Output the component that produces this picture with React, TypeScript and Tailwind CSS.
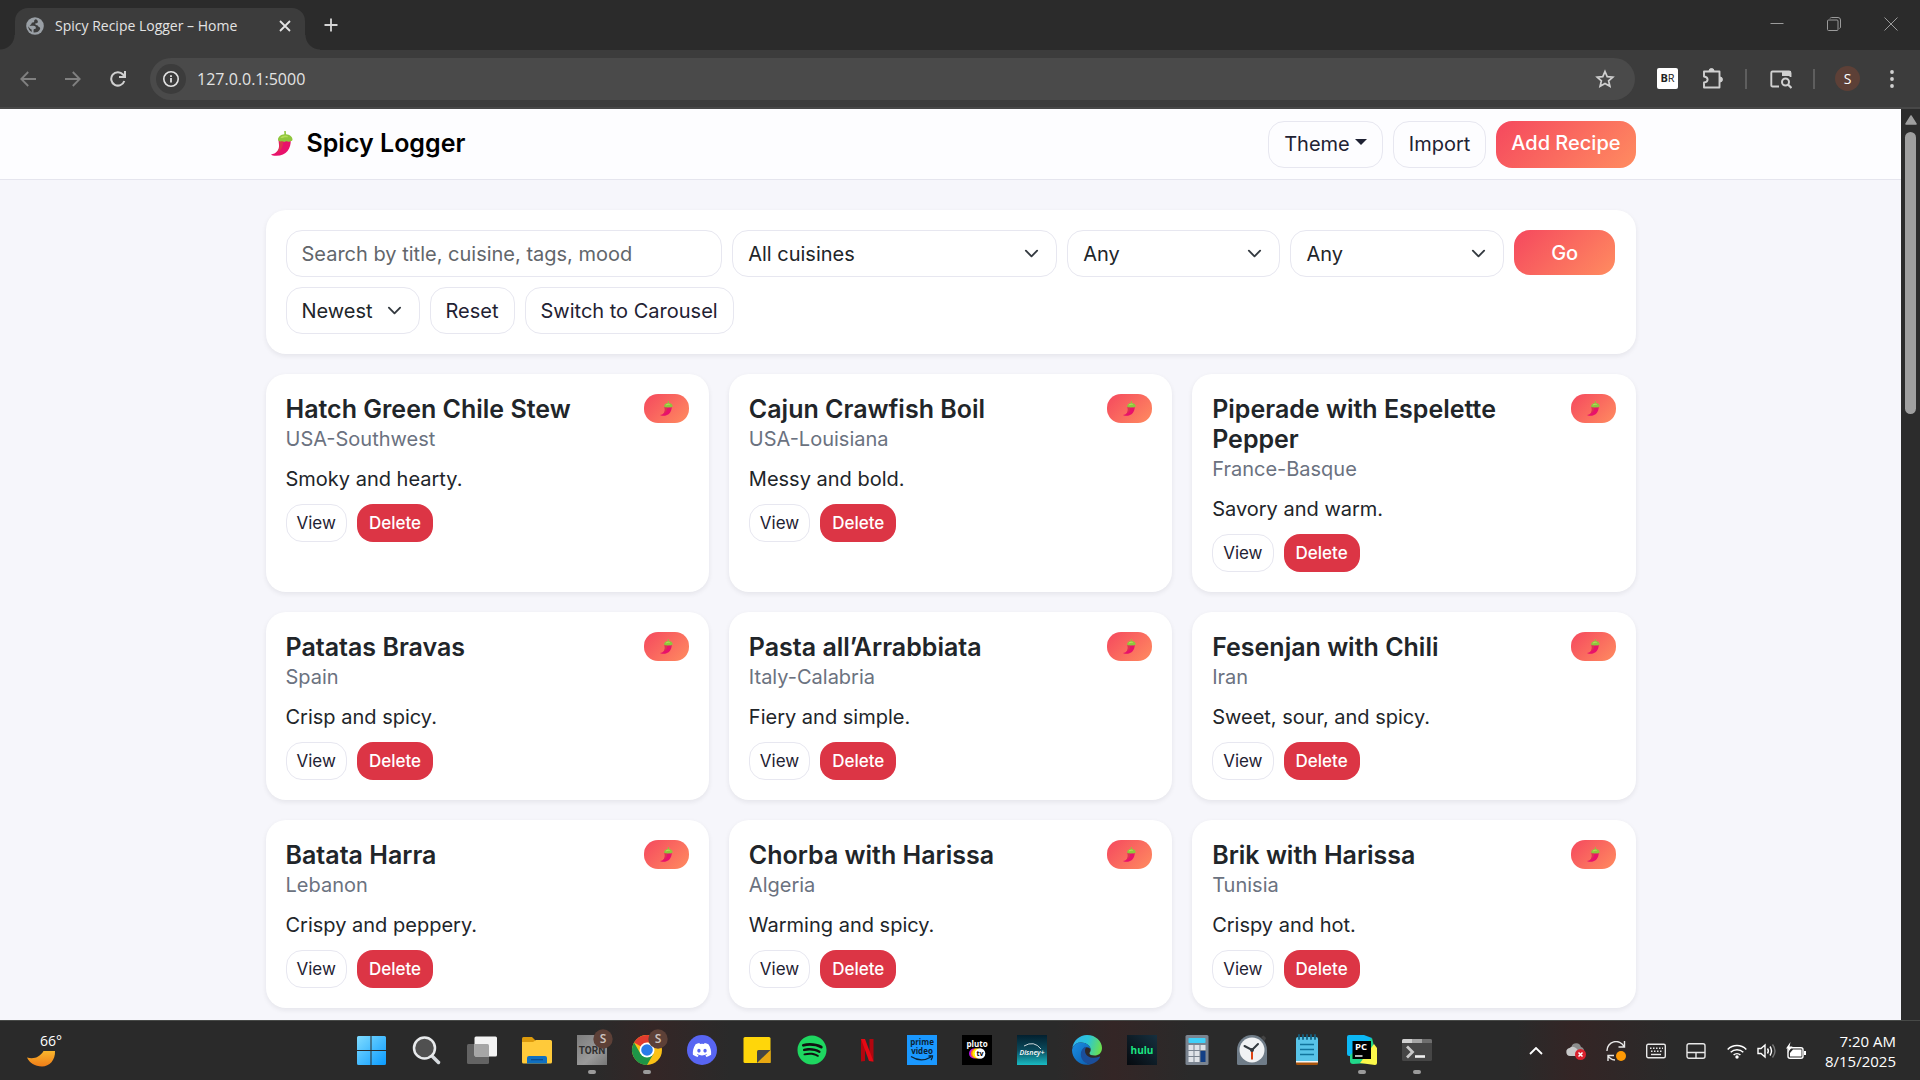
import type { ReactNode } from "react";
import { FaDiscord, FaSpotify } from "react-icons/fa6";

type Recipe = { title: string; origin: string; note: string };

const recipes: Recipe[] = [
  { title: "Hatch Green Chile Stew", origin: "USA-Southwest", note: "Smoky and hearty." },
  { title: "Cajun Crawfish Boil", origin: "USA-Louisiana", note: "Messy and bold." },
  { title: "Piperade with Espelette Pepper", origin: "France-Basque", note: "Savory and warm." },
  { title: "Patatas Bravas", origin: "Spain", note: "Crisp and spicy." },
  { title: "Pasta all’Arrabbiata", origin: "Italy-Calabria", note: "Fiery and simple." },
  { title: "Fesenjan with Chili", origin: "Iran", note: "Sweet, sour, and spicy." },
  { title: "Batata Harra", origin: "Lebanon", note: "Crispy and peppery." },
  { title: "Chorba with Harissa", origin: "Algeria", note: "Warming and spicy." },
  { title: "Brik with Harissa", origin: "Tunisia", note: "Crispy and hot." },
];

const outline = "rounded-[16px] border border-[#e7e7f0] text-[#1f2233]";
const gradient = "bg-[linear-gradient(135deg,#f5485e,#ff8c60)]";

function Chili({ className }: { className: string }) {
  return (
    <svg viewBox="0 0 22 25" className={className} aria-hidden="true">
      <path d="M7.5 9h12.200c.5 8-4 15.800-14.500 15.800-2.500 0-4.700-.5-5.200-1.300 5.200-.8 8.500-4.500 8-9.500z" fill="#e8116b" />
      <path d="M8 9h4c.8 6-1.500 10.500-6.500 13C8.300 18.500 9.300 15 8 9z" fill="#dc3450" />
      <path d="M13.200 0h1.600l.2 3.200c3.800.3 6.500 2.600 6.500 5.200 0 1-.8 1.500-1.700 1.500-1 0-1.200.8-2.100.8s-1.200-.5-2.200-.5-1.300.7-2.300.7-1.300-.6-2.300-.6-1.200.3-2 .1C7.900 10.200 7 9.600 7 8.600 7 5.800 9.900 3.500 13.400 3.200z" fill="#8fc63d" />
      <path d="M9.500 6.500c1-1.500 3-2.200 5-2.100 1.500.1 2.500.8 2.500 1.500s-2.500.3-4 .5-3.500 1.300-3.500.1z" fill="#b4dc5a" />
    </svg>
  );
}

function Select({ label, options, className }: { label: string; options: string[]; className: string }) {
  return (
    <div className={`relative ${className}`}>
      <select
        aria-label={label}
        className="h-[47px] w-full appearance-none rounded-[16px] border border-[#e7e7f0] bg-white pl-[15px] pr-10 text-[20px] text-[#212529]"
      >
        {options.map((o) => (
          <option key={o}>{o}</option>
        ))}
      </select>
      <svg viewBox="0 0 16 16" className="pointer-events-none absolute right-[18px] top-4 size-[15px]" fill="none" stroke="#343a40" strokeWidth="2" strokeLinecap="round" strokeLinejoin="round" aria-hidden="true">
        <path d="m2 5 6 6 6-6" />
      </svg>
    </div>
  );
}

function RecipeCard({ title, origin, note }: Recipe) {
  return (
    <article className="rounded-[20px] bg-white p-5 shadow-[0_2px_5px_rgba(20,20,40,0.08)]">
      <div className="flex items-start justify-between">
        <div>
          <h2 className="text-[25px] font-semibold leading-[30px] text-[#212529]">{title}</h2>
          <p className="text-[#6b7280]">{origin}</p>
        </div>
        <span className={`flex h-[29px] w-[45px] shrink-0 items-center justify-center rounded-[14px] ${gradient}`}>
          <Chili className="h-[15px] w-[13px]" />
        </span>
      </div>
      <p className="my-[10px]">{note}</p>
      <div className="flex gap-[10px]">
        <button className={`h-[38px] px-[10px] text-[17px] ${outline}`}>View</button>
        <button className="h-[38px] rounded-[16px] bg-[#dc3545] px-3 text-[17px] font-medium text-white">Delete</button>
      </div>
    </article>
  );
}

function BrowserChrome() {
  return (
    <header className="shrink-0 font-['Open_Sans','Noto_Sans',sans-serif]">
      <div className="flex h-[50px] items-end justify-between bg-[#2b2b2b]">
        <div className="flex items-end">
          <div className="size-[15px] bg-[radial-gradient(circle_at_0_0,#2b2b2b_14px,#3c3c3c_15px)]" />
          <div className="flex h-[42px] w-[290px] items-center rounded-t-[13px] bg-[#3c3c3c] pb-[7px] pl-[11px] pr-[10px]">
            <svg viewBox="0 0 18 18" className="size-[18px]" aria-hidden="true">
              <circle cx="9" cy="9" r="8.800" fill="#9aa0a6" />
              <path d="M10 2.300c-1.200.2-2 .9-1.800 1.900.2.900-.8 1.300-1.900 1.300-.8.1-.6 1.200-1.100 1.700-.6.6-1.800.8-1.300 1.600h3.600c1.400 0 2.400.9 2.400 2.200 0 .8-.9 1-1.700 1-.8.1-.6 1.400-.6 3.500 3.500.2 5.400-1.200 6.400-3.300.5-1.100-.2-1.800-1-2.200-1.200-.5-.7-1.500-2-1.700-1.400-.2-2.200-.9-1.600-1.700.5-.7 1.800-.4 2.300-1.200.5-.9 0-2.400-1.700-3.100zM2.200 9.200c0 2.500 1.500 4.700 3.600 5.800l-.2-2.600C4 12 3.300 10.600 2.200 9.200z" fill="#3c3c3c" />
            </svg>
            <span className="ml-[11px] grow whitespace-nowrap text-[14px] text-[#e3e3e3]">Spicy Recipe Logger – Home</span>
            <button aria-label="Close tab" className="flex size-5 items-center justify-center">
              <svg viewBox="0 0 12 12" className="size-3" stroke="#e3e3e3" strokeWidth="1.800"><path d="M1 1l10 10M11 1L1 11" /></svg>
            </button>
          </div>
          <div className="size-[15px] bg-[radial-gradient(circle_at_100%_0,#2b2b2b_14px,#3c3c3c_15px)]" />
          <button aria-label="New tab" className="mb-[14px] flex size-[22px] items-center justify-center">
            <svg viewBox="0 0 14 14" className="size-[14px]" stroke="#d5d5d5" strokeWidth="1.800"><path d="M7 0.500v13M0.500 7h13" /></svg>
          </button>
        </div>
        <div className="flex self-start pr-px">
          <button aria-label="Minimize" className="flex h-12 w-[57px] items-center justify-center">
            <svg viewBox="0 0 14 14" className="size-[14px]" stroke="#9b9b9b"><path d="M0.500 6.500h13" /></svg>
          </button>
          <button aria-label="Restore" className="flex h-12 w-[57px] items-center justify-center">
            <svg viewBox="0 0 14 14" className="size-[14px]" fill="none" stroke="#9b9b9b"><rect x="0.500" y="3" width="10.500" height="10.500" rx="1" /><path d="M3 1.500q.4-1 1.500-1H11q2.500 0 2.500 2.500v7q0 1-1 1.500" /></svg>
          </button>
          <button aria-label="Close" className="flex h-12 w-[57px] items-center justify-center">
            <svg viewBox="0 0 14 14" className="size-[14px]" stroke="#9b9b9b"><path d="M0.500 0.500l13 13M13.500 0.500l-13 13" /></svg>
          </button>
        </div>
      </div>
      <div className="flex h-[59px] items-center border-b-2 border-[#484848] bg-[#3c3c3c]">
        <div className="flex w-[150px] pl-[5px]">
          <button aria-label="Back" className="flex h-10 w-[45px] items-center justify-center">
            <svg viewBox="0 0 16 16" className="size-4" fill="none" stroke="#808080" strokeWidth="1.800"><path d="M16 8H1.500M8.200 1L1.300 8l6.900 7" /></svg>
          </button>
          <button aria-label="Forward" className="flex h-10 w-[45px] items-center justify-center">
            <svg viewBox="0 0 16 16" className="size-4" fill="none" stroke="#808080" strokeWidth="1.800"><path d="M0 8h14.500M7.800 1l6.900 7-6.900 7" /></svg>
          </button>
          <button aria-label="Reload" className="flex h-10 w-[45px] items-center justify-center">
            <svg viewBox="0 0 16 16" className="size-4" fill="none" stroke="#d0d0d0" strokeWidth="2"><path d="M14.300 10A6.700 6.700 0 1 1 13 3.500L14.800 5.500M15 0v6H9" /></svg>
          </button>
        </div>
        <div className="flex h-[42px] grow items-center rounded-full bg-[#4a4a4a] pl-[6px] pr-[20px]">
          <button aria-label="Site information" className="flex size-[30px] items-center justify-center rounded-full bg-[#3c3c3c]">
            <svg viewBox="0 0 16 16" className="size-4" fill="none" stroke="#e3e3e3" strokeWidth="1.600"><circle cx="8" cy="8" r="7.200" /><path d="M8 7v4.500M8 4.200v1.700" strokeWidth="1.800" /></svg>
          </button>
          <input aria-label="Address" defaultValue="127.0.0.1:5000" className="ml-[11px] grow bg-transparent text-[16px] text-[#e3e3e3] outline-none" />
          <button aria-label="Bookmark">
            <svg viewBox="0 0 20 20" className="size-5" fill="none" stroke="#d0d0d0" strokeWidth="1.700"><path d="M10 2.500l2.200 5.100 5.600.5-4.200 3.700 1.300 5.500L10 14.400l-4.900 2.900 1.300-5.500-4.200-3.700 5.600-.5z" /></svg>
          </button>
        </div>
        <div className="flex items-center pl-[22px] pr-[18px]">
          <button aria-label="BR extension" className="flex size-[21px] items-center justify-center rounded-[2px] bg-white text-[11px] text-[#222]">
            <b>B</b>R
          </button>
          <button aria-label="Extensions" className="ml-[24px]">
            <svg viewBox="0 0 22 22" className="size-[22px]" fill="none" stroke="#d0d0d0" strokeWidth="1.900" strokeLinejoin="round"><path d="M2 3.500h15.500v16H2v-5c2.600-.3 3.600-1.400 3.600-3S4.600 8.800 2 8.500z" /><path d="M7 3a2.500 2.500 0 0 1 5 0zM18 9a2.500 2.500 0 0 1 0 5z" fill="#d0d0d0" strokeWidth="1" /></svg>
          </button>
          <div className="ml-[21px] h-5 w-[2px] bg-[#5e5e5e]" />
          <button aria-label="Search side panel" className="ml-[23px]">
            <svg viewBox="0 0 22 20" className="h-5 w-[22px]" fill="none" stroke="#d0d0d0" strokeWidth="1.900"><path d="M9 17.500H2.500q-1.200 0-1.200-1.200V3.700q0-1.200 1.200-1.200H19q1.500 0 1.500 1.500v4" /><path d="M12 2h9v5h-9z" fill="#d0d0d0" stroke="none" /><circle cx="15.500" cy="13" r="3.500" strokeWidth="2" /><path d="M18 15.500l3.500 3.500" strokeWidth="2.200" /></svg>
          </button>
          <div className="ml-[21px] h-5 w-[2px] bg-[#5e5e5e]" />
          <button aria-label="Profile" className="ml-[20px] flex size-[25px] items-center justify-center rounded-full bg-[#5d4037] text-[14px] text-white">S</button>
          <button aria-label="Menu" className="ml-[22px] flex w-5 justify-center">
            <svg viewBox="0 0 4 18" className="h-[18px] w-1" fill="#d0d0d0"><circle cx="2" cy="2" r="1.900" /><circle cx="2" cy="9" r="1.900" /><circle cx="2" cy="16" r="1.900" /></svg>
          </button>
        </div>
      </div>
    </header>
  );
}

function Page() {
  return (
    <div className="min-w-0 grow overflow-hidden bg-[#f6f6fb] font-[Inter,sans-serif] text-[20px] leading-[30px] text-[#212529]">
      <nav className="border-b border-[#e5e5ee] bg-[#fdfdff]">
        <div className="mx-auto flex h-[70px] max-w-[1370px] items-center justify-between">
          <a href="#" className="flex items-center pb-[2px] pl-[5px] text-[25px] font-semibold text-black">
            <Chili className="mr-[14px] h-[25px] w-[22px]" />
            Spicy Logger
          </a>
          <div className="flex gap-[10px]">
            <button className={`flex h-[47px] items-center gap-[5px] px-[15px] ${outline}`}>
              Theme
              <svg viewBox="0 0 12 6" className="mb-1 h-[6px] w-3" fill="#1f2233" aria-hidden="true"><path d="M0 0h12L6 6z" /></svg>
            </button>
            <button className={`h-[47px] px-[15px] ${outline}`}>Import</button>
            <button className={`h-[47px] rounded-[16px] px-[15px] pb-[2px] font-medium text-white ${gradient}`}>Add Recipe</button>
          </div>
        </div>
      </nav>
      <main className="mx-auto max-w-[1370px] pt-[30px]">
        <form className="rounded-[20px] bg-white p-5 shadow-[0_2px_5px_rgba(20,20,40,0.08)]" onSubmit={(e) => e.preventDefault()}>
          <div className="grid grid-cols-12 gap-[10px]">
            <input
              type="search"
              aria-label="Search recipes"
              placeholder="Search by title, cuisine, tags, mood"
              className="col-span-4 h-[47px] min-w-0 rounded-[16px] border border-[#e7e7f0] px-[15px] placeholder:text-[#62666b]"
            />
            <Select label="Cuisine" options={["All cuisines"]} className="col-span-3" />
            <Select label="Heat level" options={["Any"]} className="col-span-2" />
            <Select label="Difficulty" options={["Any"]} className="col-span-2" />
            <button className={`h-[45px] rounded-[16px] font-medium text-white ${gradient}`}>Go</button>
          </div>
          <div className="mt-[10px] flex gap-[10px]">
            <Select label="Sort by" options={["Newest"]} className="w-[134px]" />
            <button type="button" className={`h-[47px] px-[15px] ${outline}`}>Reset</button>
            <button type="button" className={`h-[47px] px-[15px] ${outline}`}>Switch to Carousel</button>
          </div>
        </form>
        <section className="mt-5 grid grid-cols-3 gap-5">
          {recipes.map((r) => (
            <RecipeCard key={r.title} {...r} />
          ))}
        </section>
      </main>
    </div>
  );
}

function Scrollbar() {
  return (
    <div className="flex w-[19px] shrink-0 flex-col items-center bg-[#2c2c2c] pt-[6px]">
      <svg viewBox="0 0 12 10" className="h-[10px] w-3" fill="#9f9f9f" stroke="#9f9f9f" strokeWidth="1.500" strokeLinejoin="round"><path d="M6 1l5 8H1z" /></svg>
      <div className="mt-[7px] h-[282px] w-[11px] rounded-full bg-[#9f9f9f]" />
    </div>
  );
}

function AppIcon({ children, label }: { children: ReactNode; label: string }) {
  return (
    <svg viewBox="0 0 30 30" className="size-[30px] overflow-visible" role="img" aria-label={label}>
      {children}
    </svg>
  );
}

const profileBadge = (
  <g>
    <circle cx="26" cy="4" r="9.700" fill="#5d4037" />
    <text x="26" y="8" textAnchor="middle" fontSize="12" fontWeight="600" fill="#cfc4c0">S</text>
  </g>
);

const apps: { label: string; running?: boolean; icon: ReactNode }[] = [
  {
    label: "Start",
    icon: (
      <>
        <defs><linearGradient id="win" x1="0" y1="0" x2="1" y2="1"><stop offset="0" stopColor="#80dcff" /><stop offset="1" stopColor="#0a9bff" /></linearGradient></defs>
        <path d="M0 2.500Q0 1 1.500 1H13.500V15H0zM14.500 1H27.500Q29 1 29 2.500V15H14.500zM0 16H13.500V30H1.500Q0 30 0 28.500zM14.500 16H29V28.500Q29 30 27.500 30H14.500z" fill="url(#win)" />
      </>
    ),
  },
  {
    label: "Search",
    icon: (
      <g fill="none" strokeLinecap="round">
        <path d="M20.500 21.500l6 6" stroke="#d6dade" strokeWidth="3.500" />
        <circle cx="12.500" cy="13" r="10.500" fill="#505050" stroke="#e8eaec" strokeWidth="2.500" />
      </g>
    ),
  },
  {
    label: "Task view",
    icon: (
      <>
        <rect x="0" y="9" width="22" height="20" rx="1.500" fill="#636363" />
        <rect x="7.500" y="1.500" width="22.500" height="20" rx="1.500" fill="#f3f3f3" />
        <path d="M7.500 9H20.500q1.500 0 1.500 1.500v11H9q-1.500 0-1.500-1.500z" fill="#a6a6a6" />
      </>
    ),
  },
  {
    label: "File Explorer",
    icon: (
      <>
        <path d="M0 3.500Q0 2 1.500 2H10l3.500 3.500V12H0z" fill="#dc9a0c" />
        <path d="M0 7h11l3-2h14.500Q30 5 30 6.500V27q0 1.500-1.500 1.500h-27Q0 28.500 0 27z" fill="#ffca3a" />
        <path d="M5 28.500V23q0-2 2-2h16q2 0 2 2v5.500z" fill="#1070c0" />
        <path d="M9 24.700h12" stroke="#0a4a8c" strokeWidth="1.200" />
      </>
    ),
  },
  {
    label: "Torn",
    running: true,
    icon: (
      <>
        <defs><linearGradient id="torn" x1="0" y1="0" x2="1" y2="1"><stop offset="0" stopColor="#7d7d7d" /><stop offset=".6" stopColor="#9a9a9a" /><stop offset="1" stopColor="#777" /></linearGradient></defs>
        <path d="M0 0h30v30H0z" fill="url(#torn)" />
        <text x="15" y="18.500" textAnchor="middle" fontFamily="Roboto" fontSize="10" fontWeight="700" fill="#303030">TORN</text>
        {profileBadge}
      </>
    ),
  },
  {
    label: "Chrome",
    running: true,
    icon: (
      <>
        <circle cx="15" cy="15" r="15" fill="#fbc116" />
        <path d="M15 15L2 7.500A15 15 0 0 1 28 7.500H15z" fill="#e33b2e" />
        <path d="M2 7.500A15 15 0 0 0 15 30l6.500-11.200L8.500 18.800z" fill="#1e9547" />
        <circle cx="15" cy="15" r="7.500" fill="#fff" />
        <circle cx="15" cy="15" r="5.800" fill="#2a7be8" />
        {profileBadge}
      </>
    ),
  },
  {
    label: "Discord",
    icon: (
      <>
        <circle cx="15" cy="15" r="15" fill="#5865f2" />
        <FaDiscord x={5} y={5} size={20} color="#fff" />
      </>
    ),
  },
  {
    label: "Sticky Notes",
    icon: (
      <>
        <path d="M1.500 3.500Q1.500 2 3 2H27q1.500 0 1.500 1.500V28H3q-1.500 0-1.500-1.500z" fill="#ffd60a" />
        <path d="M15.500 28h11.500q1.500 0 1.500-1.500V15z" fill="#e9a812" />
        <path d="M15 28V16.500q0-1.500 1.500-1.500h12z" fill="#454545" />
      </>
    ),
  },
  {
    label: "Spotify",
    icon: (
      <>
        <circle cx="15" cy="15" r="12" fill="#111" />
        <FaSpotify size={30} color="#1ed760" />
      </>
    ),
  },
  {
    label: "Netflix",
    icon: (
      <>
        <path d="M9 4h4v22l-4 .5zM17.500 4h4v22.500l-4-.5z" fill="#b1060f" />
        <path d="M9 4h4l8.500 22.500-4.500-.6z" fill="#e50914" />
      </>
    ),
  },
  {
    label: "Prime Video",
    icon: (
      <>
        <path d="M0 0h30v30H0z" fill="#1a98ff" />
        <g fontSize="8" fontWeight="700" fill="#0b2233" textAnchor="middle"><text x="15" y="10">prime</text><text x="15" y="19">video</text></g>
        <path d="M4 21.500q10 6.500 20 .5M21.500 21h4q0 2-1.500 4" stroke="#0b2233" strokeWidth="1.300" fill="none" />
      </>
    ),
  },
  {
    label: "Pluto TV",
    icon: (
      <>
        <path d="M0 0h30v30H0z" fill="#000" />
        <text x="15" y="12" textAnchor="middle" fontSize="8" fontWeight="700" fill="#fff">pluto</text>
        <circle cx="12" cy="18.500" r="5" fill="#b512e8" /><circle cx="13.800" cy="18.500" r="5" fill="#ff7a1a" /><circle cx="15.400" cy="18.500" r="5" fill="#fff200" />
        <circle cx="18" cy="18.500" r="5.300" fill="#fff" />
        <text x="18" y="21.200" textAnchor="middle" fontSize="7" fontWeight="700" fill="#000">tv</text>
      </>
    ),
  },
  {
    label: "Disney+",
    icon: (
      <>
        <defs><linearGradient id="dis" x1="0" y1="0" x2="0" y2="1"><stop offset="0" stopColor="#03202f" /><stop offset=".5" stopColor="#0a4a5c" /><stop offset="1" stopColor="#19bcc4" /></linearGradient></defs>
        <path d="M0 0h30v30H0z" fill="url(#dis)" />
        <path d="M7 11q10-6 17 3" stroke="#fff" strokeWidth=".8" fill="none" />
        <text x="15" y="20" textAnchor="middle" fontSize="7" fontStyle="italic" fontWeight="600" fill="#fff">Disney+</text>
      </>
    ),
  },
  {
    label: "Edge",
    icon: (
      <>
        <defs>
          <linearGradient id="edge1" x1="0" y1=".3" x2="1" y2=".5"><stop offset="0" stopColor="#2fb4ee" /><stop offset=".5" stopColor="#2cc5d8" /><stop offset="1" stopColor="#6be04e" /></linearGradient>
          <linearGradient id="edge2" x1="0" y1="0" x2="1" y2="1"><stop offset="0" stopColor="#1a8fe3" /><stop offset="1" stopColor="#0c5cae" /></linearGradient>
        </defs>
        <path d="M.3 13C1.500 5.500 7.500 0 15 0c9 0 15 6.500 15 13 0 5-3.500 7.500-7.500 7.500-3 0-5-1-5-2.300 0-1 1.200-1.400 1.200-3.500C18.700 11 14 7.500 9 7.500 5 7.500 2 9.500.3 13z" fill="url(#edge1)" />
        <path d="M0 15C1 10 4.500 7.500 9 7.500c5 0 9.500 3.200 9.700 6.800-1-1.300-2.400-2-3.800-2-2.800 0-5.300 2.700-5.300 6.500 0 5.700 4.300 10.200 9.400 10.500C9 32 0 24.500 0 15z" fill="url(#edge2)" />
        <path d="M13 11.800c-2.600 1.600-4.200 4.500-4.200 7.700 0 5.300 4.700 9.800 10.200 9.800 3.800-1 7-3.300 9-6.800.5-.8-.2-1.200-1-.8-6 2.800-14 .2-14-6 0-1.500.5-2.600 1.600-3.500z" fill="#1b4e9b" />
      </>
    ),
  },
  {
    label: "Hulu",
    icon: (
      <>
        <defs><linearGradient id="hulu" x1="1" y1="0" x2="0" y2="1"><stop offset="0" stopColor="#16303f" /><stop offset="1" stopColor="#05090e" /></linearGradient></defs>
        <path d="M0 0h30v30H0z" fill="url(#hulu)" />
        <text x="15" y="19" textAnchor="middle" fontSize="10" fontWeight="700" fill="#1ce783">hulu</text>
      </>
    ),
  },
  {
    label: "Calculator",
    icon: (
      <>
        <rect x="3.500" y="0" width="23" height="30" rx="1.500" fill="#7a8490" />
        <rect x="6.500" y="3" width="17" height="5" rx=".8" fill="#3fd0f8" />
        <path d="M6.500 10h5v5h-5zM12.500 10h5v5h-5zM18.500 10h5v5h-5zM6.500 16h5v5h-5zM12.500 16h5v5h-5zM6.500 22h5v5h-5zM12.500 22h5v5h-5z" fill="#dfe3e8" />
        <path d="M18.500 16h5v11h-5z" fill="#123f85" />
      </>
    ),
  },
  {
    label: "Clock",
    icon: (
      <>
        <path d="M24 2l2.500-1.500L29 3l-1.500 3z" fill="#444" />
        <path d="M0 15a15 15 0 0 1 30 0v13.500q0 1.500-1.500 1.500h-27Q0 30 0 28.500z" fill="#6f7c88" />
        <circle cx="15" cy="15" r="12.500" fill="#f0f2f4" />
        <path d="M15 15v9.500" stroke="#dd4414" strokeWidth="2" />
        <path d="M7.500 11L15 15l6-6" stroke="#333a40" strokeWidth="2" fill="none" strokeLinecap="round" />
        <circle cx="15" cy="15" r="2" fill="#333a40" />
      </>
    ),
  },
  {
    label: "Notepad",
    icon: (
      <>
        <path d="M4 26h22v2.500q0 1.500-1.500 1.500h-19Q4 30 4 28.500z" fill="#a8540c" />
        <path d="M4 25h22v2.500H4z" fill="#f4f4f4" />
        <path d="M4 4q0-2 2-2h18q2 0 2 2v22H4z" fill="#58c4e8" />
        <path d="M8 9.500h14M8 14.500h14M8 19.500h14" stroke="#11749c" strokeWidth="1.600" />
        <path d="M7 0v4M11 0v4M15 0v4M19 0v4M23 0v4" stroke="#14607f" strokeWidth="1.800" strokeLinecap="round" />
      </>
    ),
  },
  {
    label: "PyCharm",
    running: true,
    icon: (
      <>
        <path d="M0 2Q0 0 2 0h15l8 3-15 18H2q-2 0-2-2z" fill="#0cb8f5" />
        <path d="M25 3l2 8-6 17-15 1q-3 0-3-3V20z" fill="#21d789" />
        <path d="M27 9l3 4v15q0 2-2 2l-15-2z" fill="#fcf84a" />
        <path d="M5.500 6h18.500v18H5.500z" fill="#000" />
        <text x="14" y="15" textAnchor="middle" fontSize="9.500" fontWeight="700" fill="#fff">PC</text>
        <path d="M8 21h7.500" stroke="#fff" strokeWidth="1.400" />
      </>
    ),
  },
  {
    label: "Terminal",
    running: true,
    icon: (
      <>
        <rect x="0" y="4" width="30" height="22" rx="1.500" fill="#464646" />
        <path d="M0 8V5.500Q0 4 1.500 4H10v4z" fill="#d0d0d0" /><path d="M10 4h10v4H10z" fill="#a5a5a5" /><path d="M20 4h8.500Q30 4 30 5.500V8H20z" fill="#6e6e6e" />
        <path d="M5 11.500l5.500 5.500L5 22.500" stroke="#c8c8c8" strokeWidth="2.800" fill="none" />
        <path d="M13 21.500h10" stroke="#f0f0f0" strokeWidth="2.600" />
      </>
    ),
  },
];

function Taskbar() {
  return (
    <footer className="flex h-[60px] shrink-0 items-center border-t border-[#474947] bg-[#2a2a2a] bg-[linear-gradient(90deg,transparent_31%,#342626_34%,transparent_38%,transparent_55%,#342626_58%,transparent_62%,transparent_79%,#342525_82%,transparent_87%)] font-['Open_Sans','Noto_Sans',sans-serif] text-white">
      <button aria-label="Weather" className="w-[344px] self-stretch pl-[27px]">
        <svg viewBox="0 -6 48 48" className="size-12" aria-hidden="true">
          <defs><linearGradient id="moon" x1="0" y1="0" x2="0" y2="1"><stop offset="0" stopColor="#f8b62d" /><stop offset="1" stopColor="#f07d18" /></linearGradient></defs>
          <path d="M0 24.500c7 2 13-.5 16.500-6.500H28c.5 9-5.500 15.500-13 15.500-7 0-12.500-3.500-15-9z" fill="url(#moon)" />
          <text x="13" y="13" fontSize="14" fill="#fff">66°</text>
        </svg>
      </button>
      <div className="flex grow self-stretch">
        {apps.map((a) => (
          <button key={a.label} className="flex w-[55px] flex-col items-center pt-[14px]">
            <AppIcon label={a.label}>{a.icon}</AppIcon>
            {a.running && <span className="mt-[5px] h-1 w-2 rounded-full bg-[#9b9b9b]" />}
          </button>
        ))}
      </div>
      <div className="flex items-center pr-[24px]">
        <button aria-label="Show hidden icons" className="mr-[23px]">
          <svg viewBox="0 0 14 8" className="h-2 w-[14px]" fill="none" stroke="#fff" strokeWidth="1.800"><path d="M1 7l6-6 6 6" /></svg>
        </button>
        <svg viewBox="0 0 20 18" className="mr-[20px] h-[18px] w-5" role="img" aria-label="OneDrive">
          <path d="M5.500 4.500a5 5 0 0 1 9.500.5c2 .5 3 2 3 4L9 12z" fill="#8d8d8d" />
          <path d="M4 14a4 4 0 0 1-.5-7.900C6 3.500 9.500 5 11 7l4 7z" fill="#c9c9c9" />
          <circle cx="14.500" cy="12.500" r="5.500" fill="#d9222e" />
          <path d="M12.500 10.500l4 4M16.500 10.500l-4 4" stroke="#fff" strokeWidth="1.500" />
        </svg>
        <svg viewBox="0 0 20 20" className="mr-[20px] size-5" fill="none" stroke="#e8e8e8" strokeWidth="1.400" role="img" aria-label="Update">
          <path d="M1 10a9 9 0 0 1 17-4.500M18.500 0v6h-6M2 20v-5.500h6M2 14.500Q4 18.500 9 19" /><circle cx="15" cy="15" r="5" fill="#ff9a05" stroke="none" />
        </svg>
        <svg viewBox="0 0 20 16" className="mr-[20px] h-4 w-5" fill="none" stroke="#e8e8e8" strokeWidth="1.400" role="img" aria-label="Keyboard">
          <rect x=".7" y="1.200" width="18.600" height="13.600" rx="1.500" /><path d="M4 5.200h13M5 8.200h12" strokeDasharray="1.500 1.500" strokeWidth="1.600" /><path d="M5 11.500h10" />
        </svg>
        <svg viewBox="0 0 20 16" className="mr-[21px] h-4 w-5" fill="none" stroke="#e8e8e8" strokeWidth="1.400" role="img" aria-label="Touchpad">
          <rect x="1" y=".7" width="18" height="14.600" rx="2" /><path d="M1 9.500h18M10 9.500v6" />
        </svg>
        <svg viewBox="0 0 20 16" className="mr-[10px] h-4 w-5" fill="none" stroke="#fff" strokeWidth="1.500" role="img" aria-label="Wi-Fi">
          <path d="M.7 6.500a13 13 0 0 1 18.600 0M3.700 9.300a9 9 0 0 1 12.600 0M6.600 12a5 5 0 0 1 6.800 0" /><circle cx="10" cy="14" r="1.700" fill="#fff" stroke="none" />
        </svg>
        <svg viewBox="0 0 20 16" className="mr-[9px] h-4 w-5" fill="none" stroke="#fff" strokeWidth="1.400" role="img" aria-label="Volume">
          <path d="M1 5.500h3L8 2v12l-4-3.500H1z" /><path d="M10.500 5.500q1.700 2.500 0 5M13 3.500q3 4.500 0 9" /><path d="M15.500 1.500q5 6.500 0 13" stroke="#777" />
        </svg>
        <svg viewBox="0 0 20 18" className="mr-[19px] h-[18px] w-5" role="img" aria-label="Battery">
          <rect x="2" y="5.700" width="15" height="10.600" rx="2" fill="none" stroke="#fff" strokeWidth="1.400" /><path d="M7 7.500h8.500v7H4V11zM18 9h2v4h-2z" fill="#fff" /><path d="M4.500 0L0 6.500h3L1.500 11 6.500 4.500h-3z" fill="#fff" />
        </svg>
        <time className="whitespace-nowrap text-right text-[15px] leading-5">7:20 AM<br />8/15/2025</time>
      </div>
    </footer>
  );
}

export default function App() {
  return (
    <div className="flex h-screen flex-col overflow-hidden">
      <BrowserChrome />
      <div className="flex min-h-0 grow">
        <Page />
        <Scrollbar />
      </div>
      <Taskbar />
    </div>
  );
}
